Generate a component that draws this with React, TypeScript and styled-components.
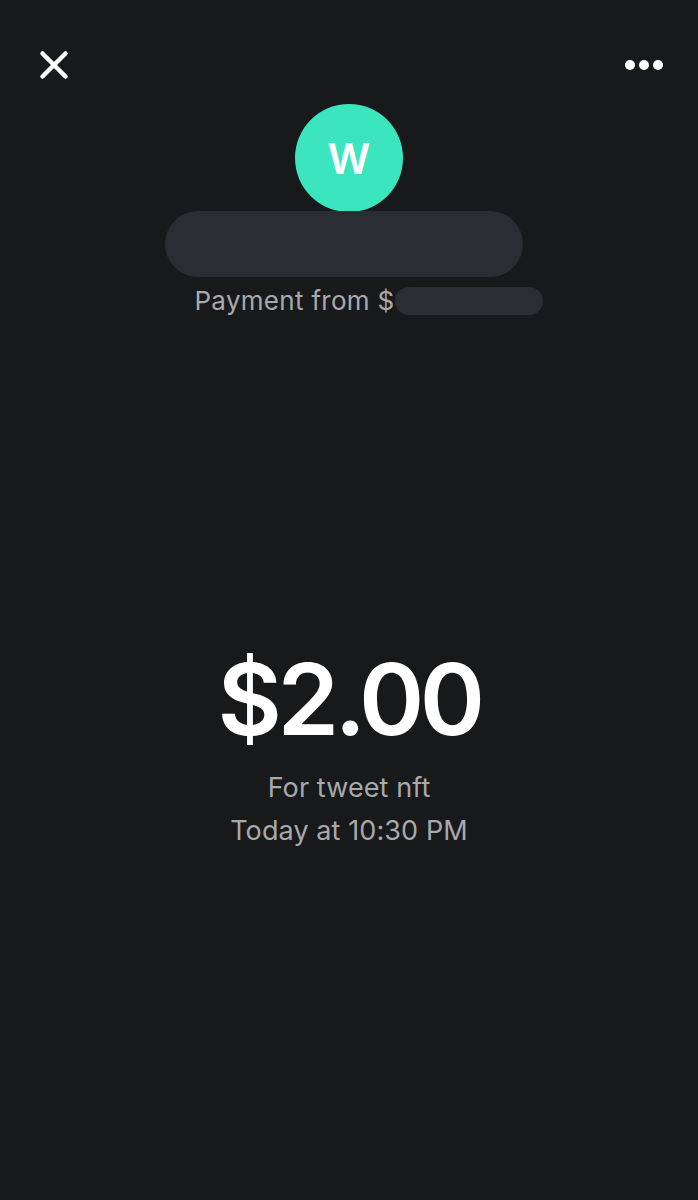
import styled, { createGlobalStyle } from 'styled-components';

const GlobalStyle = createGlobalStyle`
  html, body {
    margin: 0;
    padding: 0;
    background: #18191b;
  }
  body {
    font-family: Inter, "Noto Sans", sans-serif;
  }
`;

const Screen = styled.div`
  width: 698px;
  height: 1200px;
  background: #18191b;
  color: #fff;
  display: flex;
  flex-direction: column;
  align-items: center;
  overflow: hidden;
`;

const TopBar = styled.div`
  width: 100%;
  box-sizing: border-box;
  display: flex;
  justify-content: space-between;
  align-items: center;
  padding: 46px 32px 0 34px;
  height: 84px;
`;

const IconButton = styled.button`
  background: none;
  border: 0;
  padding: 0;
  display: flex;
  color: #fff;
`;

const Avatar = styled.div`
  width: 108px;
  height: 108px;
  border-radius: 50%;
  background: #3be6be;
  display: flex;
  align-items: center;
  justify-content: center;
  font-size: 42px;
  font-weight: 600;
  color: #fff;
  margin-top: 20px;
`;

const Redacted = styled.div<{ $w: number; $h: number }>`
  width: ${(p) => p.$w}px;
  height: ${(p) => p.$h}px;
  border-radius: ${(p) => p.$h / 2}px;
  background: #2a2d31;
`;

const NameBar = styled(Redacted)`
  margin-top: -1px;
  margin-right: 10px;
`;

const FromLine = styled.div`
  display: flex;
  align-items: center;
  margin-top: 8px;
  margin-left: 39px;
  font-size: 26px;
  letter-spacing: 0.3px;
  color: #a8a9ab;
`;

const Amount = styled.div`
  margin-top: 334px;
  font-size: 99px;
  font-weight: 600;
  letter-spacing: -4.5px;
  line-height: 1;
`;

const Detail = styled.div<{ $top: number }>`
  margin-top: ${(p) => p.$top}px;
  font-size: 27px;
  letter-spacing: 0.1px;
  color: #a8a9ab;
`;

export default function App() {
  return (
    <Screen>
      <GlobalStyle />
      <TopBar>
        <IconButton>
          <svg width="40" height="40" viewBox="0 0 40 40">
            <path d="M8.5 8.5 L31.5 31.5 M31.5 8.5 L8.5 31.5" stroke="#fff" strokeWidth="4.5" strokeLinecap="round" />
          </svg>
        </IconButton>
        <IconButton>
          <svg width="44" height="14" viewBox="0 0 44 14">
            <circle cx="8" cy="7" r="5" fill="#fff" />
            <circle cx="22" cy="7" r="5" fill="#fff" />
            <circle cx="36" cy="7" r="5" fill="#fff" />
          </svg>
        </IconButton>
      </TopBar>
      <Avatar>W</Avatar>
      <NameBar $w={358} $h={66} />
      <FromLine>
        Payment from $<Redacted $w={148} $h={28} />
      </FromLine>
      <Amount>$2.00</Amount>
      <Detail $top={22}>For tweet nft</Detail>
      <Detail $top={10}>Today at 10:30 PM</Detail>
    </Screen>
  );
}
